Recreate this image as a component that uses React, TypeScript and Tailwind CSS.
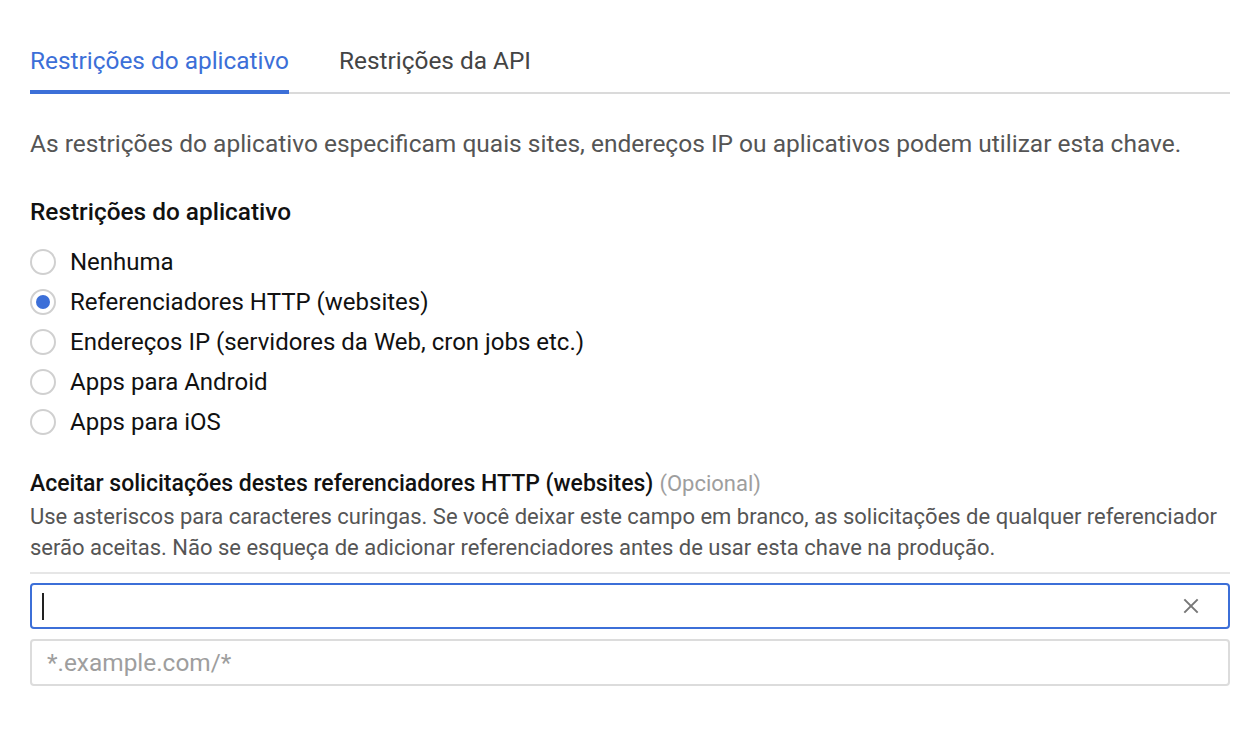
import React from "react";

const options = [
  "Nenhuma",
  "Referenciadores HTTP (websites)",
  "Endereços IP (servidores da Web, cron jobs etc.)",
  "Apps para Android",
  "Apps para iOS",
];

function Radio({ checked }: { checked: boolean }) {
  return (
    <span className="flex h-[26px] w-[26px] shrink-0 items-center justify-center rounded-full border-2 border-[#d0d0d0] bg-white">
      {checked && <span className="h-[14px] w-[14px] rounded-full bg-[#3c6fd8]" />}
    </span>
  );
}

export default function App() {
  return (
    <div
      className="min-h-[730px] w-full bg-white pl-[30px] pt-[47px]"
      style={{ fontFamily: "Roboto, 'Noto Sans', Arial, sans-serif" }}
    >
      <div className="w-[1200px]">
        {/* Tabs */}
        <div className="flex gap-[50px] border-b-2 border-[#dadada]">
          <div className="-mb-[2px] border-b-4 border-[#3c6fd8] pb-[15px] text-[24.4px] leading-[28px] text-[#3c6fd8]">
            Restrições do aplicativo
          </div>
          <div className="pb-[15px] text-[24.4px] leading-[28px] text-[#444]">
            Restrições da API
          </div>
        </div>

        <p className="mt-[36px] whitespace-nowrap text-[24.5px] leading-[28px] text-[#555]">
          As restrições do aplicativo especificam quais sites, endereços IP ou aplicativos podem utilizar esta chave.
        </p>

        <h3 className="mt-[40px] text-[24.4px] font-medium leading-[28px] text-[#111]">
          Restrições do aplicativo
        </h3>

        <div className="mt-[16px] flex flex-col">
          {options.map((o, i) => (
            <label key={o} className="flex h-[40px] items-center gap-[14px]">
              <Radio checked={i === 1} />
              <span className="text-[24px] leading-[28px] text-[#111]">{o}</span>
            </label>
          ))}
        </div>

        <div className="mt-[29px] flex items-baseline gap-[6px] whitespace-nowrap leading-[26px]">
          <span className="text-[23px] font-medium text-[#111]">
            Aceitar solicitações destes referenciadores HTTP (websites)
          </span>
          <span className="text-[22px] text-[#9e9e9e]">(Opcional)</span>
        </div>
        <p className="mt-[4px] whitespace-nowrap text-[22px] leading-[31px] text-[#555]">
          Use asteriscos para caracteres curingas. Se você deixar este campo em branco, as solicitações de qualquer referenciador
          <br />
          serão aceitas. Não se esqueça de adicionar referenciadores antes de usar esta chave na produção.
        </p>

        <div className="mt-[9px] h-[2px] bg-[#e6e6e6]" />

        <div className="mt-[9px] flex h-[46px] items-center rounded-[4px] border-2 border-[#3c6fd8] pl-[10px] pr-[27px]">
          <div className="h-[27px] w-[2px] bg-[#222]" />
          <div className="flex-1" />
          <svg width="20" height="20" viewBox="0 0 24 24" fill="none" stroke="#777" strokeWidth="2.4" strokeLinecap="butt">
            <path d="M4 4 L20 20 M20 4 L4 20" />
          </svg>
        </div>

        <div className="mt-[10px] flex h-[47px] items-center rounded-[4px] border-2 border-[#dcdcdc] pl-[15px]">
          <span className="text-[24.4px] leading-[28px] text-[#9e9e9e]">*.example.com/*</span>
        </div>
      </div>
    </div>
  );
}
